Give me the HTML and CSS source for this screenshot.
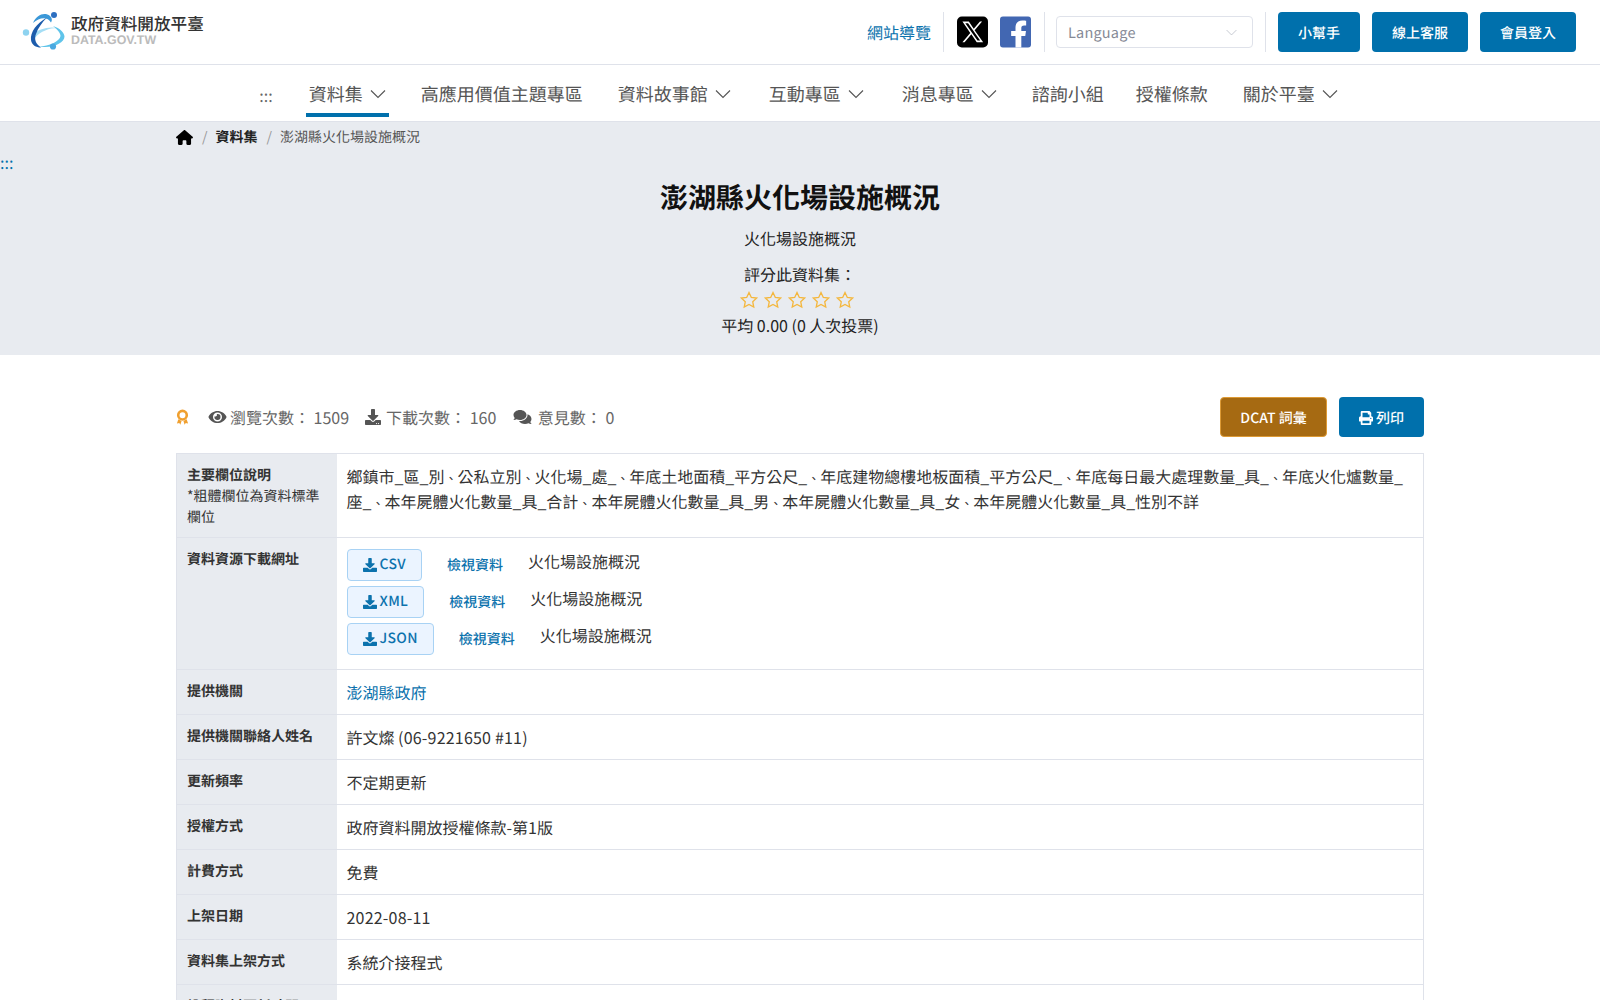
FILE: index.html
```html
<!DOCTYPE html>
<html lang="zh-Hant">
<head>
<meta charset="utf-8">
<title>澎湖縣火化場設施概況</title>
<link rel="stylesheet" href="styles.css">
</head>
<body>
<header class="top">
  <a class="logo" href="#">
    <svg class="logo-mark" viewBox="0 0 50 48" aria-hidden="true">
      <path d="M12 27C18 21 29 18 37 20C30 20 20 23 15 30z" fill="#a5def5"/>
      <path d="M33 18C40 20 44.500 25 44.500 28.500C44.500 35 32 41 19 38.500C29 38.500 40 33 40.500 28C40.500 25 37 21 33 18z" fill="#5fc4ea"/>
      <path d="M13 15C17 6 25 4 30 8C32 10 32.500 12 31 14.500C28 9 20 8.500 13 15z" fill="#3b98d8"/>
      <path d="M27 9.500C17 15 10 24 11 32C11.600 37 16 39.500 21 39.500C15.500 36 14 31 16 26C18 20 22 14.500 27 9.500z" fill="#1c5cac"/>
      <circle cx="6" cy="24.500" r="3.200" fill="#8ed3f0"/>
      <circle cx="34" cy="7" r="3" fill="#2d6fc0"/>
      <circle cx="33" cy="38.500" r="3.100" fill="#4aa8e0"/>
    </svg>
    <span class="logo-text">
      <span class="logo-zh">政府資料開放平臺</span>
      <span class="logo-en">DATA.GOV.TW</span>
    </span>
  </a>
  <div class="top-right">
    <a class="sitemap" href="#">網站導覽</a>
    <span class="vsep"></span>
    <a class="social" href="#" aria-label="X">
      <svg viewBox="0 0 32 32"><rect width="32" height="32" rx="5" fill="#000"/><path d="M18.200 14.100 25.900 5.200h-2.200l-6.400 7.400-5.100-7.400H5.600l8.100 11.800-8.100 9.600h2.200l7-8.200 5.600 8.200h6.600zM8.600 6.900h2.800l12.500 18h-2.800z" fill="#fff"/></svg>
    </a>
    <a class="social" href="#" aria-label="Facebook">
      <svg viewBox="0 0 32 32"><rect width="32" height="32" rx="3" fill="#4267b2"/><path d="M22 32V20h4.100l.7-5H22v-3.100c0-1.500.7-2.700 2.900-2.700H27V4.400C26.300 4.300 24.800 4.100 23 4.100c-4.200 0-7 2.500-7 7.200V15h-4.500v5H16v12z" fill="#fff"/></svg>
    </a>
    <span class="vsep vsep-a"></span>
    <div class="lang">
      <span>Language</span>
      <svg class="chev chev-sm" viewBox="0 0 16 16"><path d="M2 5l6 6 6-6" fill="none" stroke="currentColor" stroke-width="1"/></svg>
    </div>
    <span class="vsep vsep-b"></span>
    <a class="btn btn-top btn-help" href="#">小幫手</a>
    <a class="btn btn-top" href="#">線上客服</a>
    <a class="btn btn-top" href="#">會員登入</a>
  </div>
</header>

<nav class="nav">
  <span class="nav-dots">:::</span>
  <a class="nav-item active" href="#">資料集<svg class="chev" viewBox="0 0 16 16"><path d="M1 4.500l7 7 7-7" fill="none" stroke="currentColor" stroke-width="1.100"/></svg></a>
  <a class="nav-item plain" href="#">高應用價值主題專區</a>
  <a class="nav-item" href="#">資料故事館<svg class="chev" viewBox="0 0 16 16"><path d="M1 4.500l7 7 7-7" fill="none" stroke="currentColor" stroke-width="1.100"/></svg></a>
  <a class="nav-item" href="#">互動專區<svg class="chev" viewBox="0 0 16 16"><path d="M1 4.500l7 7 7-7" fill="none" stroke="currentColor" stroke-width="1.100"/></svg></a>
  <a class="nav-item" href="#">消息專區<svg class="chev" viewBox="0 0 16 16"><path d="M1 4.500l7 7 7-7" fill="none" stroke="currentColor" stroke-width="1.100"/></svg></a>
  <a class="nav-item plain" href="#">諮詢小組</a>
  <a class="nav-item plain" href="#">授權條款</a>
  <a class="nav-item" href="#">關於平臺<svg class="chev" viewBox="0 0 16 16"><path d="M1 4.500l7 7 7-7" fill="none" stroke="currentColor" stroke-width="1.100"/></svg></a>
</nav>

<section class="hero">
  <div class="crumbs">
    <svg class="home" viewBox="0 0 576 512"><path d="M575.800 255.500c0 18-15 32.100-32 32.100h-32l.7 160.200c0 2.700-.2 5.400-.5 8.100V472c0 22.100-17.900 40-40 40H456c-1.100 0-2.200 0-3.300-.1c-1.400 .1-2.800 .1-4.200 .1H416 392c-22.100 0-40-17.900-40-40V448 384c0-17.700-14.300-32-32-32H256c-17.700 0-32 14.300-32 32v64 24c0 22.100-17.900 40-40 40H160 128.100c-1.500 0-3-.1-4.500-.2c-1.200 .1-2.400 .2-3.600 .2H104c-22.100 0-40-17.900-40-40V360c0-.9 0-1.900 .1-2.800V287.600H32c-18 0-32-14-32-32.100c0-9 3-17 10-24L266.400 8c7-7 15-8 22-8s15 2 21 7L564.800 231.500c8 7 12 15 11 24z"/></svg>
    <span class="crumb-sep">/</span>
    <b class="crumb-link">資料集</b>
    <span class="crumb-sep">/</span>
    <span class="crumb-cur">澎湖縣火化場設施概況</span>
  </div>
  <div class="hero-dots">:::</div>
  <h1 class="title">澎湖縣火化場設施概況</h1>
  <p class="subtitle">火化場設施概況</p>
  <p class="rate-label">評分此資料集：</p>
  <div class="stars">
    <svg viewBox="0 0 24 24"><path class="star" d="M12 3l2.800 5.900 6.400.8-4.700 4.400 1.200 6.400L12 17.400l-5.700 3.100 1.200-6.400-4.700-4.400 6.400-.8z"/></svg>
    <svg viewBox="0 0 24 24"><path class="star" d="M12 3l2.800 5.900 6.400.8-4.700 4.400 1.200 6.400L12 17.400l-5.700 3.100 1.200-6.400-4.700-4.400 6.400-.8z"/></svg>
    <svg viewBox="0 0 24 24"><path class="star" d="M12 3l2.800 5.900 6.400.8-4.700 4.400 1.200 6.400L12 17.400l-5.700 3.100 1.200-6.400-4.700-4.400 6.400-.8z"/></svg>
    <svg viewBox="0 0 24 24"><path class="star" d="M12 3l2.800 5.900 6.400.8-4.700 4.400 1.200 6.400L12 17.400l-5.700 3.100 1.200-6.400-4.700-4.400 6.400-.8z"/></svg>
    <svg viewBox="0 0 24 24"><path class="star" d="M12 3l2.800 5.900 6.400.8-4.700 4.400 1.200 6.400L12 17.400l-5.700 3.100 1.200-6.400-4.700-4.400 6.400-.8z"/></svg>
  </div>
  <p class="avg">平均 0.00 (0 人次投票)</p>
</section>

<main class="content">
  <div class="stats-row">
    <div class="stats">
      <svg class="award" viewBox="0 0 14 18"><circle cx="7" cy="6.500" r="4.600" fill="none" stroke="#f0a030" stroke-width="2.800"/><path d="M2.500 11l-1.500 4.500 2.500-.6 1.200 2 1.300-4.200zM11.500 11l1.500 4.500-2.500-.6-1.200 2-1.300-4.200z" fill="#f0a030"/></svg>
      <span class="stat">
        <svg class="ic ic-eye" viewBox="0 0 576 512"><path d="M572.520 241.400C518.290 135.590 410.930 64 288 64S57.680 135.640 3.480 241.410a32.350 32.350 0 0 0 0 29.190C57.710 376.410 165.070 448 288 448s230.320-71.640 284.520-177.410a32.350 32.350 0 0 0 0-29.190zM288 400a144 144 0 1 1 144-144 143.930 143.930 0 0 1-144 144zm0-240a95.310 95.310 0 0 0-25.310 3.790 47.850 47.850 0 0 1-66.900 66.900A95.780 95.780 0 1 0 288 160z"/></svg>
        <span>瀏覽次數： 1509</span>
      </span>
      <span class="stat">
        <svg class="ic ic-dl" viewBox="0 0 512 512"><path d="M216 0h80c13.300 0 24 10.700 24 24v168h87.700c17.800 0 26.700 21.500 14.100 34.100L269.700 378.300c-7.500 7.500-19.800 7.500-27.300 0L90.100 226.100c-12.600-12.600-3.700-34.100 14.100-34.100H192V24c0-13.300 10.700-24 24-24zm296 376v112c0 13.300-10.700 24-24 24H24c-13.300 0-24-10.700-24-24V376c0-13.300 10.700-24 24-24h146.700l49 49c20.100 20.100 52.500 20.100 72.600 0l49-49H488c13.300 0 24 10.700 24 24zm-124 88c0-11-9-20-20-20s-20 9-20 20 9 20 20 20 20-9 20-20zm64 0c0-11-9-20-20-20s-20 9-20 20 9 20 20 20 20-9 20-20z"/></svg>
        <span>下載次數： 160</span>
      </span>
      <span class="stat">
        <svg class="ic ic-cm" viewBox="0 0 576 512"><path d="M416 192c0-88.400-93.100-160-208-160S0 103.600 0 192c0 34.300 14.100 65.900 38 92-13.400 30.200-35.500 54.200-35.800 54.500-2.200 2.300-2.800 5.700-1.500 8.700S4.800 352 8 352c36.600 0 66.900-12.300 88.700-25 32.200 15.700 70.300 25 111.300 25 114.900 0 208-71.600 208-160zm122 220c23.900-26 38-57.700 38-92 0-66.900-53.500-124.200-129.300-148.100.9 6.600 1.300 13.300 1.300 20.100 0 105.900-107.700 192-240 192-10.800 0-21.300-.8-31.700-1.900C207.800 439.600 281.800 480 368 480c41 0 79.100-9.200 111.300-25 21.800 12.700 52.100 25 88.700 25 3.200 0 6.100-1.900 7.300-4.800 1.300-2.900.7-6.300-1.500-8.700-.3-.3-22.400-24.200-35.800-54.500z"/></svg>
        <span>意見數： 0</span>
      </span>
    </div>
    <div class="actions">
      <a class="btn btn-gold" href="#">DCAT 詞彙</a>
      <a class="btn btn-print" href="#">
        <svg class="ic-print" viewBox="0 0 512 512"><path d="M448 192V77.250c0-8.490-3.370-16.620-9.370-22.630L393.370 9.370c-6-6-14.140-9.370-22.630-9.370H96C78.330 0 64 14.330 64 32v160c-35.350 0-64 28.650-64 64v112c0 8.840 7.160 16 16 16h48v96c0 17.670 14.330 32 32 32h320c17.670 0 32-14.330 32-32v-96h48c8.840 0 16-7.160 16-16V256c0-35.350-28.650-64-64-64zm-64 256H128v-96h256v96zm0-224H128V64h192v48c0 8.840 7.160 16 16 16h48v96zm48 72c-13.250 0-24-10.750-24-24 0-13.260 10.750-24 24-24s24 10.740 24 24c0 13.250-10.750 24-24 24z"/></svg>列印</a>
    </div>
  </div>

  <table class="info">
    <tr>
      <th><b>主要欄位說明</b><span class="th-note">*粗體欄位為資料標準欄位</span></th>
      <td>鄉鎮市_區_別<span class="dun">、</span>公私立別<span class="dun">、</span>火化場_處_<span class="dun">、</span>年底土地面積_平方公尺_<span class="dun">、</span>年底建物總樓地板面積_平方公尺_<span class="dun">、</span>年底每日最大處理數量_具_<span class="dun">、</span>年底火化爐數量_座_<span class="dun">、</span>本年屍體火化數量_具_合計<span class="dun">、</span>本年屍體火化數量_具_男<span class="dun">、</span>本年屍體火化數量_具_女<span class="dun">、</span>本年屍體火化數量_具_性別不詳</td>
    </tr>
    <tr>
      <th><b>資料資源下載網址</b></th>
      <td class="dl-cell">
        <div class="dl-row">
          <a class="dl-btn" href="#"><svg class="ic-dl-sm" viewBox="0 0 512 512"><path d="M216 0h80c13.300 0 24 10.700 24 24v168h87.700c17.800 0 26.700 21.500 14.100 34.100L269.700 378.300c-7.500 7.500-19.800 7.500-27.300 0L90.100 226.100c-12.600-12.600-3.700-34.100 14.100-34.100H192V24c0-13.300 10.700-24 24-24zm296 376v112c0 13.300-10.700 24-24 24H24c-13.300 0-24-10.700-24-24V376c0-13.300 10.700-24 24-24h146.700l49 49c20.100 20.100 52.500 20.100 72.600 0l49-49H488c13.300 0 24 10.700 24 24z"/></svg>CSV</a>
          <a class="view" href="#">檢視資料</a>
          <span class="dl-name">火化場設施概況</span>
        </div>
        <div class="dl-row">
          <a class="dl-btn" href="#"><svg class="ic-dl-sm" viewBox="0 0 512 512"><path d="M216 0h80c13.300 0 24 10.700 24 24v168h87.700c17.800 0 26.700 21.500 14.100 34.100L269.700 378.300c-7.500 7.500-19.800 7.500-27.300 0L90.100 226.100c-12.600-12.600-3.700-34.100 14.100-34.100H192V24c0-13.300 10.700-24 24-24zm296 376v112c0 13.300-10.700 24-24 24H24c-13.300 0-24-10.700-24-24V376c0-13.300 10.700-24 24-24h146.700l49 49c20.100 20.100 52.500 20.100 72.600 0l49-49H488c13.300 0 24 10.700 24 24z"/></svg>XML</a>
          <a class="view" href="#">檢視資料</a>
          <span class="dl-name">火化場設施概況</span>
        </div>
        <div class="dl-row">
          <a class="dl-btn" href="#"><svg class="ic-dl-sm" viewBox="0 0 512 512"><path d="M216 0h80c13.300 0 24 10.700 24 24v168h87.700c17.800 0 26.700 21.500 14.100 34.100L269.700 378.300c-7.500 7.500-19.800 7.500-27.300 0L90.100 226.100c-12.600-12.600-3.700-34.100 14.100-34.100H192V24c0-13.300 10.700-24 24-24zm296 376v112c0 13.300-10.700 24-24 24H24c-13.300 0-24-10.700-24-24V376c0-13.300 10.700-24 24-24h146.700l49 49c20.100 20.100 52.500 20.100 72.600 0l49-49H488c13.300 0 24 10.700 24 24z"/></svg>JSON</a>
          <a class="view" href="#">檢視資料</a>
          <span class="dl-name">火化場設施概況</span>
        </div>
      </td>
    </tr>
    <tr><th><b>提供機關</b></th><td><a class="org" href="#">澎湖縣政府</a></td></tr>
    <tr><th><b>提供機關聯絡人姓名</b></th><td>許文燦 <span class="lat">(06-9221650 #11)</span></td></tr>
    <tr><th><b>更新頻率</b></th><td>不定期更新</td></tr>
    <tr><th><b>授權方式</b></th><td>政府資料開放授權條款-第1版</td></tr>
    <tr><th><b>計費方式</b></th><td>免費</td></tr>
    <tr><th><b>上架日期</b></th><td><span class="lat">2022-08-11</span></td></tr>
    <tr><th><b>資料集上架方式</b></th><td>系統介接程式</td></tr>
    <tr><th><b>詮釋資料更新時間</b></th><td>2024-05-21 01:07:32</td></tr>
  </table>
</main>
</body>
</html>
```

FILE: styles.css
```css
* { box-sizing: border-box; }
html, body { margin: 0; padding: 0; }
body {
  font-family: "Noto Sans CJK TC", "Noto Sans", sans-serif;
  font-size: 16px;
  color: #333;
  background: #fff;
  overflow-x: hidden;
  text-rendering: geometricPrecision;
}
a { text-decoration: none; color: inherit; }
p { margin: 0; }

.top {
  height: 65px;
  border-bottom: 1px solid #dfe2ea;
  display: flex;
  align-items: center;
  justify-content: space-between;
  padding: 0 24px 1px 20px;
}
.logo { display: flex; align-items: center; gap: 1px; }
.logo-mark { width: 50px; height: 48px; }
.logo-text { display: flex; flex-direction: column; margin-top: -2px; }
.logo-zh { font-size: 16.600px; line-height: 19px; font-weight: 500; color: #333; white-space: nowrap; }
.logo-en { font-family: "Liberation Sans", sans-serif; font-size: 12.400px; line-height: 14px; font-weight: 700; color: #bbb; }
.top-right { display: flex; align-items: center; }
.sitemap { color: #0b72ad; font-size: 16px; margin-right: 12px; }
.vsep { width: 1px; height: 40px; background: #dfe2ea; margin-right: 12.500px; }
.vsep-a { margin-right: 11.500px; }
.vsep-b { margin-left: 12px; margin-right: 12px; }
.social { display: flex; width: 31px; height: 32px; margin-right: 12.500px; }
.social svg { width: 31px; height: 32px; }
.lang {
  width: 197px; height: 32px;
  border: 1px solid #dfe2ea;
  border-radius: 4px;
  padding: 1px 11px 0;
  display: flex; align-items: center; justify-content: space-between;
  color: #868a96;
  font-size: 14.500px;
  letter-spacing: .2px;
  background: #fff;
}
.chev { width: 16px; height: 16px; margin-left: 7px; flex: none; }
.chev-sm { width: 13px; height: 13px; color: #b9bcc6; margin-left: 0; margin-right: 3px; }
.btn {
  display: inline-flex; align-items: center; justify-content: center;
  border-radius: 4px;
  color: #fff;
  font-size: 14px;
  font-weight: 500;
  background: #0070ac;
  height: 40px;
  padding-top: 1px;
}
.btn-top { width: 96px; margin-left: 12px; padding-top: 2px; }
.btn-help { width: 82px; margin-left: 0; }

.nav {
  height: 57px;
  border-bottom: 1px solid #dfe2ea;
  display: flex;
  justify-content: center;
  align-items: stretch;
  gap: 32px;
  color: #555;
  font-size: 18px;
}
.nav-dots { display: flex; align-items: center; font-size: 16px; color: #666; margin-right: 1px; padding-top: 4px; }
.nav-item { display: flex; align-items: center; padding: 5px 3px 0; border-bottom: 4px solid transparent; border-top: 4px solid transparent; height: 52px; }
.nav-item.plain { padding: 5px 0 0; }
.nav-item.active { border-bottom-color: #0070ac; }

.hero { background: #e8ebf0; height: 233px; text-align: center; position: relative; color: #222; padding-top: 3px; }
.crumbs { display: flex; align-items: center; gap: 8px; width: 1248px; margin: 0 auto; height: 24px; font-size: 14px; color: #555; }
.home { width: 17px; height: 15px; fill: #000; }
.crumb-sep { color: #999; margin: 0 0 0 1px; }
.crumb-link { color: #222; font-weight: 700; }
.hero-dots { position: absolute; left: 0; top: 28px; font-size: 16px; line-height: 24px; color: #0070ac; }
.title { margin: 28px 0 0; font-size: 28px; line-height: 40px; font-weight: 700; color: #111; }
.subtitle { margin-top: 9px; line-height: 24px; }
.rate-label { margin-top: 12px; line-height: 24px; }
.stars { display: flex; justify-content: center; gap: 4.200px; height: 24px; margin-top: 2px; padding-right: 6px; align-items: center; }
.stars svg { width: 20px; height: 20px; }
.star { fill: none; stroke: #f4b73e; stroke-width: 1.600; stroke-linejoin: miter; }
.avg { line-height: 24px; margin-top: 1px; }

.content { width: 1248px; margin: 0 auto; padding-top: 42px; }
.stats-row { display: flex; justify-content: space-between; align-items: center; height: 40px; margin-bottom: 16px; }
.stats { display: flex; align-items: center; color: #666; }
.award { width: 13px; height: 17px; margin-right: 19px; }
.stat { display: flex; align-items: center; margin-right: 15.500px; white-space: nowrap; }
.ic { fill: #555; height: 16px; }
.ic-eye { width: 19px; margin-right: 3px; }
.ic-dl { width: 16px; margin-right: 5.500px; }
.ic-cm { width: 21px; margin-right: 5px; }
.actions { display: flex; gap: 12px; }
.btn-gold { width: 107px; background: #a66a12; border: 1px solid #dd9a35; }
.btn-print { width: 85px; gap: 3px; }
.ic-print { width: 14px; height: 14px; fill: #fff; }

.info { width: 100%; border-collapse: collapse; table-layout: fixed; border: 1px solid #dfe2ea; }
.info tr { border-bottom: 1px solid #dfe2ea; }
.info th {
  width: 160px;
  background: #e8ebf0;
  text-align: left;
  vertical-align: top;
  font-size: 14px;
  line-height: 21px;
  font-weight: 400;
  padding: 11px 10px 9px;
  color: #333;
}
.info th b { font-weight: 700; display: block; }
.th-note { display: block; }
.info td {
  vertical-align: top;
  padding: 10px 10px 9px;
  line-height: 25px;
  color: #333;
}
.dun { font-size: 12px; line-height: 0; margin: 0 .5px; }
.lat { letter-spacing: .2px; }
.info td.dl-cell { padding: 8px 10px 12px; }
.dl-row { display: flex; align-items: center; height: 37px; }
.dl-btn {
  display: inline-flex; align-items: center;
  height: 32px;
  padding: 0 15px;
  border: 1px solid #a8d2f4;
  border-radius: 4px;
  background: #ebf4ff;
  color: #0b72ad;
  font-size: 14px;
  font-weight: 500;
  letter-spacing: .3px;
}
.ic-dl-sm { width: 14px; height: 14px; fill: #0b72ad; margin-right: 3px; }
.view { color: #0b72ad; font-size: 14px; font-weight: 500; margin-left: 25px; margin-top: 2px; }
.dl-name { margin-left: 25px; margin-top: -6px; }
.org { color: #0b72ad; }
```
